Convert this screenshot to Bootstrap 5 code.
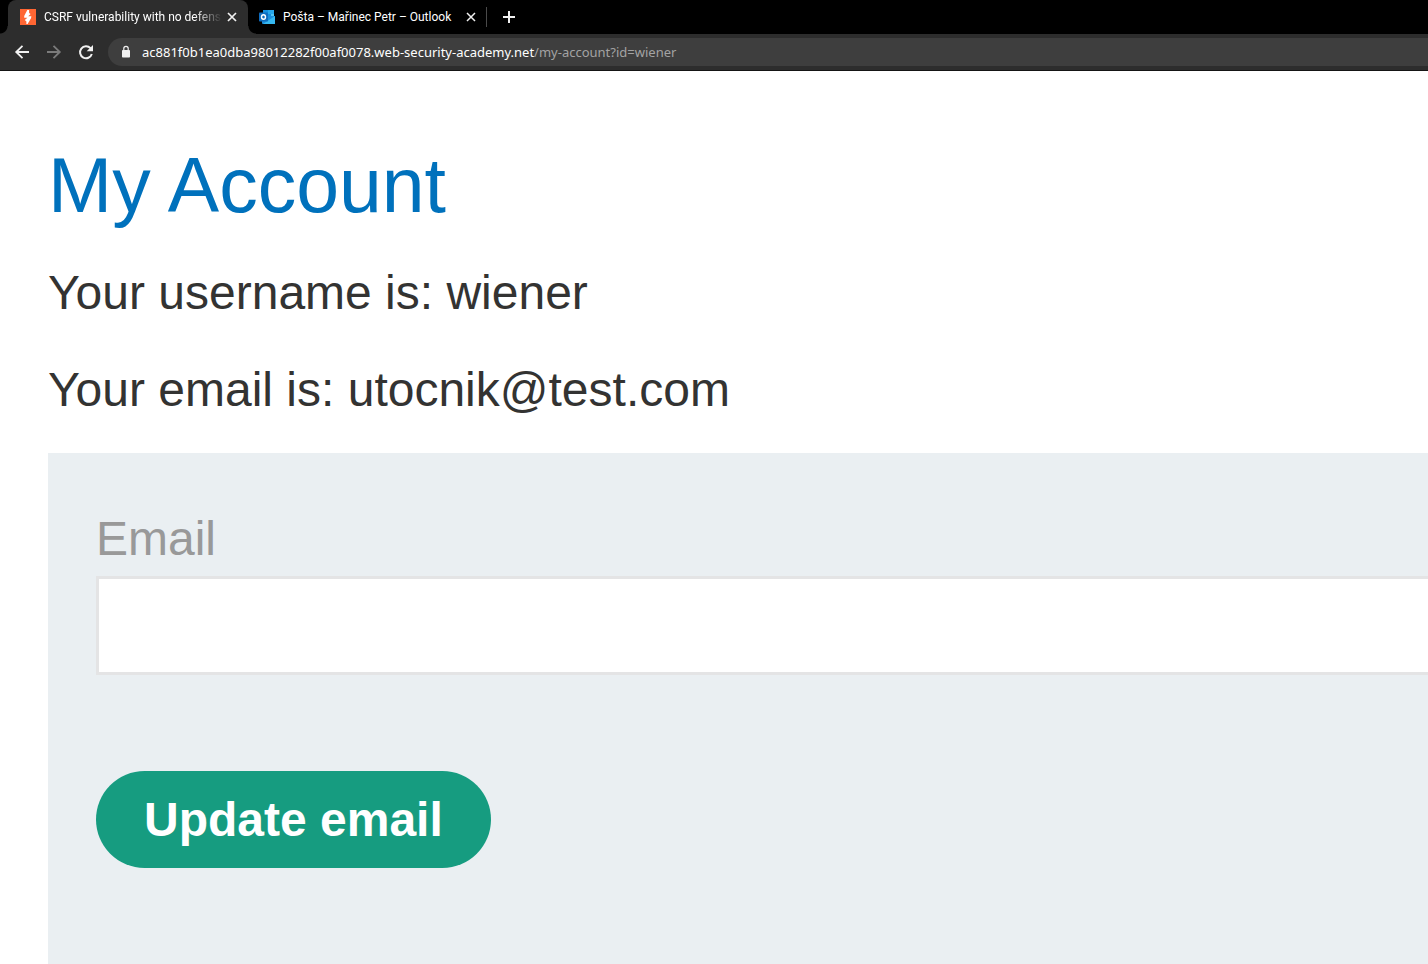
<!DOCTYPE html>
<html lang="en">
<head>
<meta charset="utf-8">
<meta name="viewport" content="width=device-width, initial-scale=1">
<title>CSRF vulnerability with no defenses</title>
<link href="https://cdn.jsdelivr.net/npm/bootstrap@5.3.0/dist/css/bootstrap.min.css" rel="stylesheet">
<style>
  body { font-family: "Liberation Sans", Arial, sans-serif; color: #333332; font-size: 48px; line-height: 56px; }
  .chrome { font-family: "Noto Sans", "Open Sans", sans-serif; font-size: 12px; line-height: 18px; background: #2d2d2d; color: #fff; }
  .tabstrip { font-family: Roboto, "Noto Sans", sans-serif; background: #000; height: 34px; padding-left: 8px; }
  .chrome-tab { height: 34px; width: 238px; padding: 0 9px 0 11px; }
  .chrome-tab.current { width: 240px; padding: 0 10px 0 12px; background: #2d2d2d; border-radius: 8px 8px 0 0; position: relative; }
  .chrome-tab.current::before, .chrome-tab.current::after { content: ""; position: absolute; bottom: 0; width: 8px; height: 8px; }
  .chrome-tab.current::before { left: -8px; background: radial-gradient(circle at 0 0, #000 7px, #2d2d2d 8px); }
  .chrome-tab.current::after { right: -8px; background: radial-gradient(circle at 100% 0, #000 7px, #2d2d2d 8px); }
  .tab-title { color: #fff; text-decoration: none; white-space: nowrap; overflow: hidden; }
  .fade-end { -webkit-mask-image: linear-gradient(to left, transparent, #000 28px); mask-image: linear-gradient(to left, transparent, #000 28px); }
  .icon-btn { background: none; border: 0; padding: 0; color: #f1f1f1; display: flex; flex: none; }
  .icon-btn:disabled { color: #7b7b7b; }
  .tab-rule { width: 1px; height: 20px; background: #4a4a4a; }
  .toolbar { height: 37px; padding-left: 14px; border-bottom: 1px solid #151515; }
  .omnibox { background: #3e3e3e; border-radius: 14px 0 0 14px; height: 28px; padding-left: 12px; margin-left: 14px; gap: 10px; font-size: 13px; }
  .omnibox a { color: #a3a3a3; text-decoration: none; }
  .omnibox strong { color: #fff; font-weight: 400; }
  .account { padding: 70px 0 0 48px; }
  .account h1 { color: #0071bc; font-size: 77px; line-height: 88px; font-weight: 400; margin-bottom: 36px; }
  .account p { margin-bottom: 41px; }
  .account p:last-of-type { margin-bottom: 35px; }
  .login-form { background: #eaeff2; padding: 58px 0 96px 48px; }
  .login-form label { color: #999; margin-bottom: 9px; }
  .login-form .form-control { height: 99px; border: 3px solid #e4e4e5; border-right: 0; font-size: 48px; margin-bottom: 96px; }
  .btn-update { background: #169c80; color: #fff; font-size: 48px; line-height: 57px; font-weight: 700; padding: 20px 48px; border: 0; }
  .btn-update:hover { background: #128069; color: #fff; }
</style>
</head>
<body class="d-flex flex-column min-vh-100 bg-white">
<header class="chrome">
  <div class="tabstrip d-flex align-items-center">
    <div class="chrome-tab current d-flex align-items-center">
      <svg class="flex-shrink-0" width="16" height="16" viewBox="0 0 16 16" aria-hidden="true"><path fill="#ff6633" d="M0 0h16v16H0z"/><path fill="#fff" d="M7.3 1h1.8v3l1.5 1-2.4 2.3h3.2L11 9.3 7.6 15H6.4v-2.6L4.8 11l2.6-2.2H4.2V7z"/></svg>
      <a href="#" class="tab-title fade-end ms-2 flex-grow-1">CSRF vulnerability with no defens</a>
      <button class="icon-btn ms-1" type="button" aria-label="Close tab"><svg width="12" height="12" viewBox="0 0 12 12" fill="none" stroke="currentColor" stroke-width="1.7"><path d="m2 2 8 8M10 2l-8 8"/></svg></button>
    </div>
    <div class="chrome-tab d-flex align-items-center">
      <svg class="flex-shrink-0" width="16" height="16" viewBox="0 0 16 16" aria-hidden="true"><path fill="#1490df" d="M4 1h11v8H4z"/><path fill="#28a8ea" d="M9 1h6v4H9z"/><path fill="#50c4f4" d="M12 5h3v4h-3z"/><path fill="#1c8fdc" d="M3 7h13v7.4q0 .6-.6.6H4q-1 0-1-1z"/><path fill="#35b8f1" d="M16 7v7.4q0 .6-.6.6H4z"/><rect y="3.5" width="9" height="9" rx=".8" fill="#0f6cbd"/><ellipse cx="4.5" cy="8" rx="2" ry="2.2" fill="none" stroke="#fff" stroke-width="1.4"/></svg>
      <a href="#" class="tab-title ms-2 flex-grow-1">Pošta – Mařinec Petr – Outlook</a>
      <button class="icon-btn ms-1" type="button" aria-label="Close tab"><svg width="12" height="12" viewBox="0 0 12 12" fill="none" stroke="currentColor" stroke-width="1.5"><path d="m2 2 8 8M10 2l-8 8"/></svg></button>
    </div>
    <span class="tab-rule"></span>
    <button class="icon-btn ms-3" type="button" aria-label="New tab"><svg width="12" height="12" viewBox="0 0 12 12" fill="none" stroke="currentColor" stroke-width="2"><path d="M6 0v12M0 6h12"/></svg></button>
  </div>
  <div class="toolbar d-flex align-items-center">
    <nav class="d-flex gap-3" aria-label="Browser">
      <button class="icon-btn" type="button" aria-label="Back"><svg width="16" height="16" viewBox="0 0 16 16" fill="none" stroke="currentColor" stroke-width="1.8"><path d="M15 8H2M8.5 1.8 2.2 8l6.3 6.2"/></svg></button>
      <button class="icon-btn" type="button" aria-label="Forward" disabled><svg width="16" height="16" viewBox="0 0 16 16" fill="none" stroke="currentColor" stroke-width="1.8"><path d="M1 8h13M7.5 1.8 13.8 8l-6.3 6.2"/></svg></button>
      <button class="icon-btn" type="button" aria-label="Reload"><svg width="16" height="16" viewBox="0 0 16 16" fill="none" stroke="currentColor" stroke-width="2"><path d="M13.8 10A6 6 0 1 1 12.5 4.2L14 5.8"/><path d="M15 1v6.3H8.7z" fill="currentColor" stroke="none"/></svg></button>
    </nav>
    <div class="omnibox d-flex align-items-center flex-grow-1">
      <svg width="12" height="14" viewBox="0 0 12 14" aria-hidden="true"><rect x="2" y="5" width="8" height="7.5" rx=".8" fill="#f1f1f1"/><path d="M3.8 5.5V3.6a2.2 2.2 0 0 1 4.4 0v1.9" fill="none" stroke="#f1f1f1" stroke-width="1.2"/></svg>
      <a href="#" class="text-nowrap"><strong>ac881f0b1ea0dba98012282f00af0078.web-security-academy.net</strong>/my-account?id=wiener</a>
    </div>
  </div>
</header>
<main class="account d-flex flex-column flex-grow-1">
  <h1>My Account</h1>
  <p>Your username is: wiener</p>
  <p>Your email is: utocnik@test.com</p>
  <form class="login-form flex-grow-1">
    <label class="d-block" for="email">Email</label>
    <input class="form-control rounded-0" id="email" type="email" name="email">
    <button class="btn btn-update rounded-pill" type="submit">Update email</button>
  </form>
</main>
<script src="https://cdn.jsdelivr.net/npm/bootstrap@5.3.0/dist/js/bootstrap.bundle.min.js"></script>
</body>
</html>
